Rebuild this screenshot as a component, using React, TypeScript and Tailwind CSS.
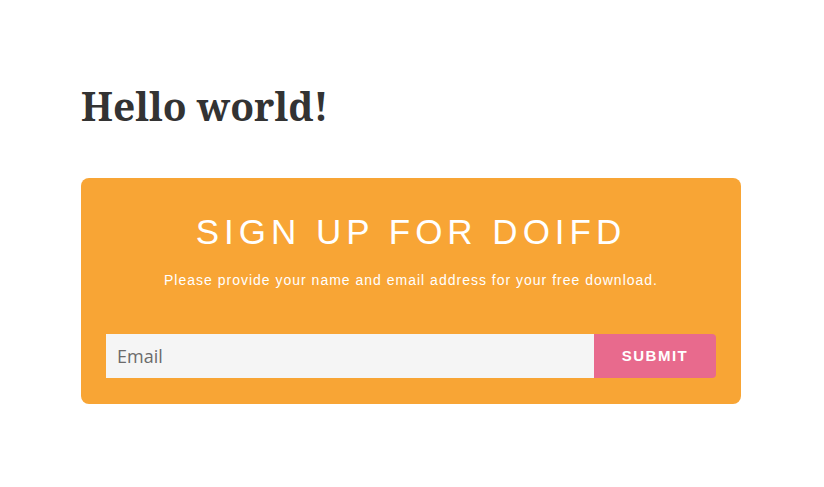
export default function App() {
  return (
    <div className="min-h-screen bg-white px-[81px] pt-[83px]">
      <h1 className="text-[39px] leading-[46px] font-bold text-[#333333] [font-family:'Noto_Serif','DejaVu_Serif',serif]">
        Hello world!
      </h1>
      <div className="mt-[49px] w-[660px] rounded-[8px] bg-[#f8a535] px-[25px] pt-[34px] pb-[26px] text-center text-white [font-family:'Liberation_Sans',Arial,sans-serif]">
        <h2 className="text-[35px] leading-[40px] tracking-[5px] uppercase font-normal">
          Sign up for DOIFD
        </h2>
        <p className="mt-[20px] text-[14px] leading-[16px] tracking-[1px]">
          Please provide your name and email address for your free download.
        </p>
        <form className="mt-[46px] flex h-[44px]" onSubmit={(e) => e.preventDefault()}>
          <input
            type="email"
            placeholder="Email"
            className="flex-1 bg-[#f5f5f5] px-[11px] text-[18px] text-[#555] placeholder-[#6b6b6b] outline-none [font-family:'Open_Sans',sans-serif]"
          />
          <button
            type="submit"
            className="w-[122px] rounded-r-[4px] bg-[#e86a8d] text-[15px] font-bold tracking-[1.5px] text-white"
          >
            SUBMIT
          </button>
        </form>
      </div>
    </div>
  );
}
